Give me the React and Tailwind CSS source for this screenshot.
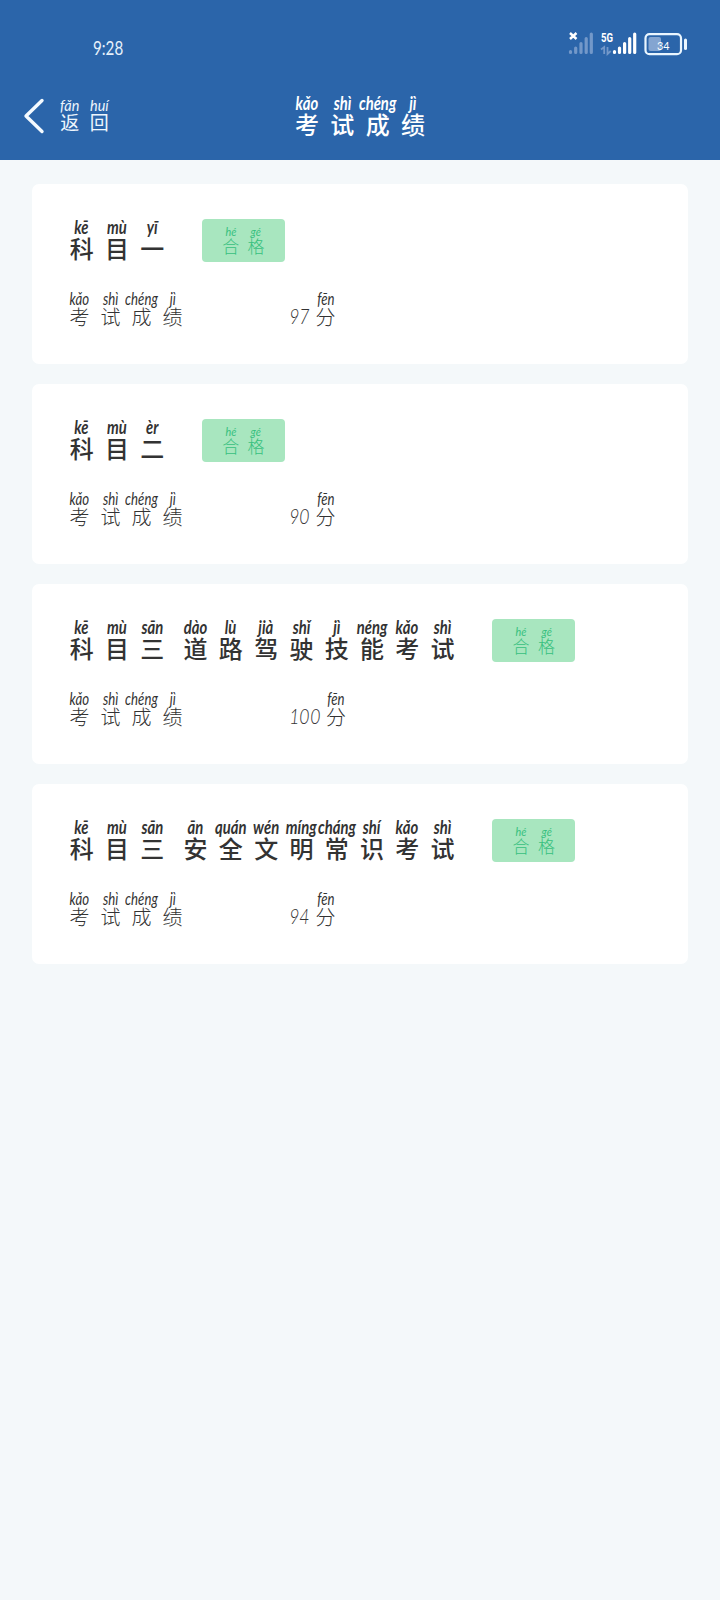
import React from 'react';
import clsx from 'clsx';

// Each entry is [pinyin, hanzi]; a null entry is a word gap.
const BACK = [['fǎn', '返'], ['huí', '回']];
const SCORE_LABEL = [['kǎo', '考'], ['shì', '试'], ['chéng', '成'], ['jì', '绩']];
const PASSED = [['hé', '合'], ['gé', '格']];

const SUBJECTS = [
    { score: '97', title: [['kē', '科'], ['mù', '目'], ['yī', '一']] },
    { score: '90', title: [['kē', '科'], ['mù', '目'], ['èr', '二']] },
    {
        score: '100',
        title: [
            ['kē', '科'], ['mù', '目'], ['sān', '三'], null, ['dào', '道'], ['lù', '路'], ['jià', '驾'],
            ['shǐ', '驶'], ['jì', '技'], ['néng', '能'], ['kǎo', '考'], ['shì', '试'],
        ],
    },
    {
        score: '94',
        title: [
            ['kē', '科'], ['mù', '目'], ['sān', '三'], null, ['ān', '安'], ['quán', '全'], ['wén', '文'],
            ['míng', '明'], ['cháng', '常'], ['shí', '识'], ['kǎo', '考'], ['shì', '试'],
        ],
    },
];

const SIZES = {
    title: {
        cell: 'w-[35.3px]',
        pinyin: 'text-[19.5px] leading-[20px] font-bold scale-x-[0.76]',
        hanzi: 'text-[24px] leading-[21px] font-medium',
    },
    body: {
        cell: 'w-[31px]',
        pinyin: 'text-[16.5px] leading-[15px] font-normal scale-x-[0.8]',
        hanzi: 'text-[20px] leading-[20px] font-light',
    },
    back: {
        cell: 'w-[29.5px]',
        pinyin: 'text-[16px] leading-[14px] scale-x-[0.9]',
        hanzi: 'text-[19px] leading-[19px] font-normal',
    },
    badge: {
        cell: 'w-[25.4px]',
        pinyin: 'text-[12px] leading-[12px] scale-x-[0.9]',
        hanzi: 'text-[17px] leading-[16px] font-light',
    },
};

const Annotated = ({ chars, size }) => {
    const s = SIZES[size];
    return (
        <div className="flex shrink-0">
            {chars.map((c, i) =>
                c ? (
                    <div key={i} className={clsx('flex flex-col items-center shrink-0', s.cell)}>
                        <span className={clsx('font-[Lato,sans-serif] italic whitespace-nowrap', s.pinyin)}>{c[0]}</span>
                        <span className={s.hanzi}>{c[1]}</span>
                    </div>
                ) : (
                    <div key={i} className="w-2 shrink-0" />
                )
            )}
        </div>
    );
};

const StatusIcons = () => (
    <svg width="120" height="26" viewBox="0 0 120 26" fill="none">
        {/* SIM 1, no service */}
        <path d="M2 3l6.5 6M8.5 3L2 9" stroke="#fff" strokeWidth="2.4" />
        <g stroke="#7398c9" strokeWidth="3.2" strokeLinecap="round">
            <path d="M2.5 21.5v1M7.7 18v4.5M13 13.5v9M18.2 8.5v14M23.3 4v18.5" />
        </g>

        {/* SIM 2, 5G */}
        <text x="33" y="11.8" fill="#fff" fontSize="13" fontWeight="700" fontFamily="Roboto, sans-serif" textLength="12" lengthAdjust="spacingAndGlyphs">5G</text>
        <path d="M33 19.5l3.2-2.5v7M39.5 17v7l3.2-3" stroke="#7398c9" strokeWidth="1.8" />
        <g stroke="#fff" strokeWidth="3.2" strokeLinecap="round">
            <path d="M46.5 21.5v1M51.5 18v4.5M56.6 13.5v9M61.7 8.5v14M66.7 4v18.5" />
        </g>

        {/* Battery */}
        <rect x="77.5" y="4.2" width="35.5" height="20" rx="4" stroke="#eaf6ff" strokeWidth="2.2" />
        <rect x="80.5" y="7" width="12.5" height="14" rx="2" fill="#84a5d1" />
        <rect x="116" y="8.5" width="3" height="11.5" rx="1.5" fill="#eaf6ff" />
        <text x="89" y="20" fill="#fff" fontSize="12" fontFamily="Lato, sans-serif" textLength="12.5" lengthAdjust="spacingAndGlyphs">34</text>
    </svg>
);

const Header = () => (
    <header className="h-[160px] bg-[#2b65aa] text-white">
        <div className="h-[92.5px] flex justify-between pl-[93px] pr-[32px] pt-[29.5px]">
            <span className="font-[Lato,sans-serif] text-[18.5px] leading-[36px] text-[#e6f1fb] origin-left scale-x-[0.82]">9:28</span>
            <StatusIcons />
        </div>
        <div className="grid grid-cols-[1fr_auto_1fr] items-start">
            <button type="button" className="flex items-start pl-[23px] pt-[5px] text-[#eef6fd]">
                <svg width="22" height="36" viewBox="0 0 22 36" fill="none">
                    <path d="M19 2.5L3 18l16 15.5" stroke="#f4faff" strokeWidth="3.4" strokeLinecap="round" strokeLinejoin="round" />
                </svg>
                <div className="pl-[10px]">
                    <Annotated chars={BACK} size="back" />
                </div>
            </button>
            <h1>
                <Annotated chars={SCORE_LABEL} size="title" />
            </h1>
        </div>
    </header>
);

const SubjectCard = ({ title, score }) => (
    <section className="h-[180px] bg-white rounded-[7px] pl-8 pt-[33px] text-[#333333]">
        <div className="flex items-start gap-8">
            <Annotated chars={title} size="title" />
            <div className="mt-[2px] w-[83px] h-[43px] flex justify-center pt-[6.5px] rounded bg-[#a8e6bf] text-[#37c07e]">
                <Annotated chars={PASSED} size="badge" />
            </div>
        </div>
        <div className="flex items-end mt-[30px]">
            <div className="w-[225px]">
                <Annotated chars={SCORE_LABEL} size="body" />
            </div>
            <div className="flex items-end">
                {score.split('').map((d, i) => (
                    <span key={i} className="w-[10.5px] flex justify-center font-[Lato,sans-serif] italic font-light text-[22px] leading-[23px]">
                        <span className="scale-x-[0.8]">{d}</span>
                    </span>
                ))}
                <Annotated chars={[['fēn', '分']]} size="body" />
            </div>
        </div>
    </section>
);

export default function App() {
    return (
        <div className="w-[720px] h-[1600px] overflow-hidden bg-[#f4f8fa] font-['Noto_Sans_CJK_SC',sans-serif]">
            <Header />
            <main className="flex flex-col gap-5 px-8 pt-6">
                {SUBJECTS.map((s, i) => (
                    <SubjectCard key={i} title={s.title} score={s.score} />
                ))}
            </main>
        </div>
    );
}
